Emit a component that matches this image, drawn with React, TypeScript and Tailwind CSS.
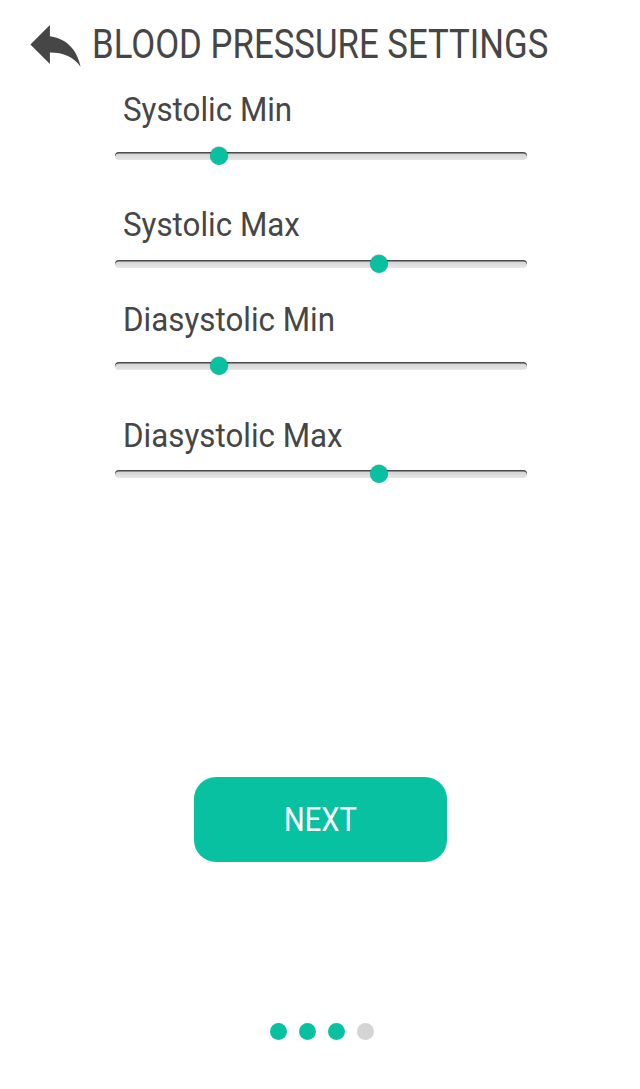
const TEAL = "#08c1a1";

type Setting = {
  label: string;
  value: number; // percent along track
  rowClass: string;
  gapClass: string;
};

const settings: Setting[] = [
  { label: "Systolic Min", value: 25.2, rowClass: "mt-[14px]", gapClass: "mt-[21px]" },
  { label: "Systolic Max", value: 64.1, rowClass: "mt-[42px]", gapClass: "mt-[14px]" },
  { label: "Diasystolic Min", value: 25.2, rowClass: "mt-[29px]", gapClass: "mt-[21px]" },
  { label: "Diasystolic Max", value: 64.1, rowClass: "mt-[43px]", gapClass: "mt-[13px]" },
];

function ReplyIcon() {
  return (
    <svg viewBox="0 0 24 24" className="w-[67px] h-[67px] shrink-0" fill="#464646">
      <path d="M10 9V5l-7 7 7 7v-4.1c5 0 8.5 1.6 11 5.1-1-5-4-10-11-11z" />
    </svg>
  );
}

function Slider({ value }: { value: number }) {
  return (
    <div className="relative ml-[115px] w-[412px] h-[18px] flex items-center">
      <div className="w-full h-[8px] rounded-full bg-gradient-to-b from-[#cfcfcf] to-[#e6e6e6] shadow-[inset_0_1.5px_0_#4a4a4a]" />
      <div
        className="absolute top-0 w-[18px] h-[18px] -ml-[9px] rounded-full bg-[#08c1a1] shadow-[0_-0.5px_1px_rgba(0,0,0,0.45)]"
        style={{ left: `${value}%` }}
      />
    </div>
  );
}

export default function App() {
  return (
    <div className="w-[640px] h-[1089px] bg-white flex flex-col font-['Roboto',sans-serif] text-[#464646] overflow-hidden">
      <div className="flex items-center pl-[22px] pt-[11px]">
        <ReplyIcon />
        <div className="ml-[3px] h-[40px] text-[40px] leading-[40px] whitespace-nowrap">
          <span className="inline-block origin-left scale-x-[0.869]">BLOOD PRESSURE SETTINGS</span>
        </div>
      </div>

      {settings.map((s) => (
        <div key={s.label} className={s.rowClass}>
          <div className="ml-[123px] h-[34px] text-[34px] leading-[34px] whitespace-nowrap">
            <span className="inline-block origin-left scale-x-[0.922]">{s.label}</span>
          </div>
          <div className={s.gapClass}>
            <Slider value={s.value} />
          </div>
        </div>
      ))}

      <div className="mt-[294px] flex justify-center">
        <button
          className="w-[253px] h-[85px] ml-[1px] rounded-[22px] flex items-center justify-center text-white text-[33px] leading-none"
          style={{ backgroundColor: TEAL }}
        >
          <span className="inline-block scale-x-[0.88]">NEXT</span>
        </button>
      </div>

      <div className="mt-[161px] flex justify-center gap-[12px] pl-[4px]">
        <span className="w-[17px] h-[17px] rounded-full bg-[#08c1a1]" />
        <span className="w-[17px] h-[17px] rounded-full bg-[#08c1a1]" />
        <span className="w-[17px] h-[17px] rounded-full bg-[#08c1a1]" />
        <span className="w-[17px] h-[17px] rounded-full bg-[#d4d4d4]" />
      </div>
    </div>
  );
}
